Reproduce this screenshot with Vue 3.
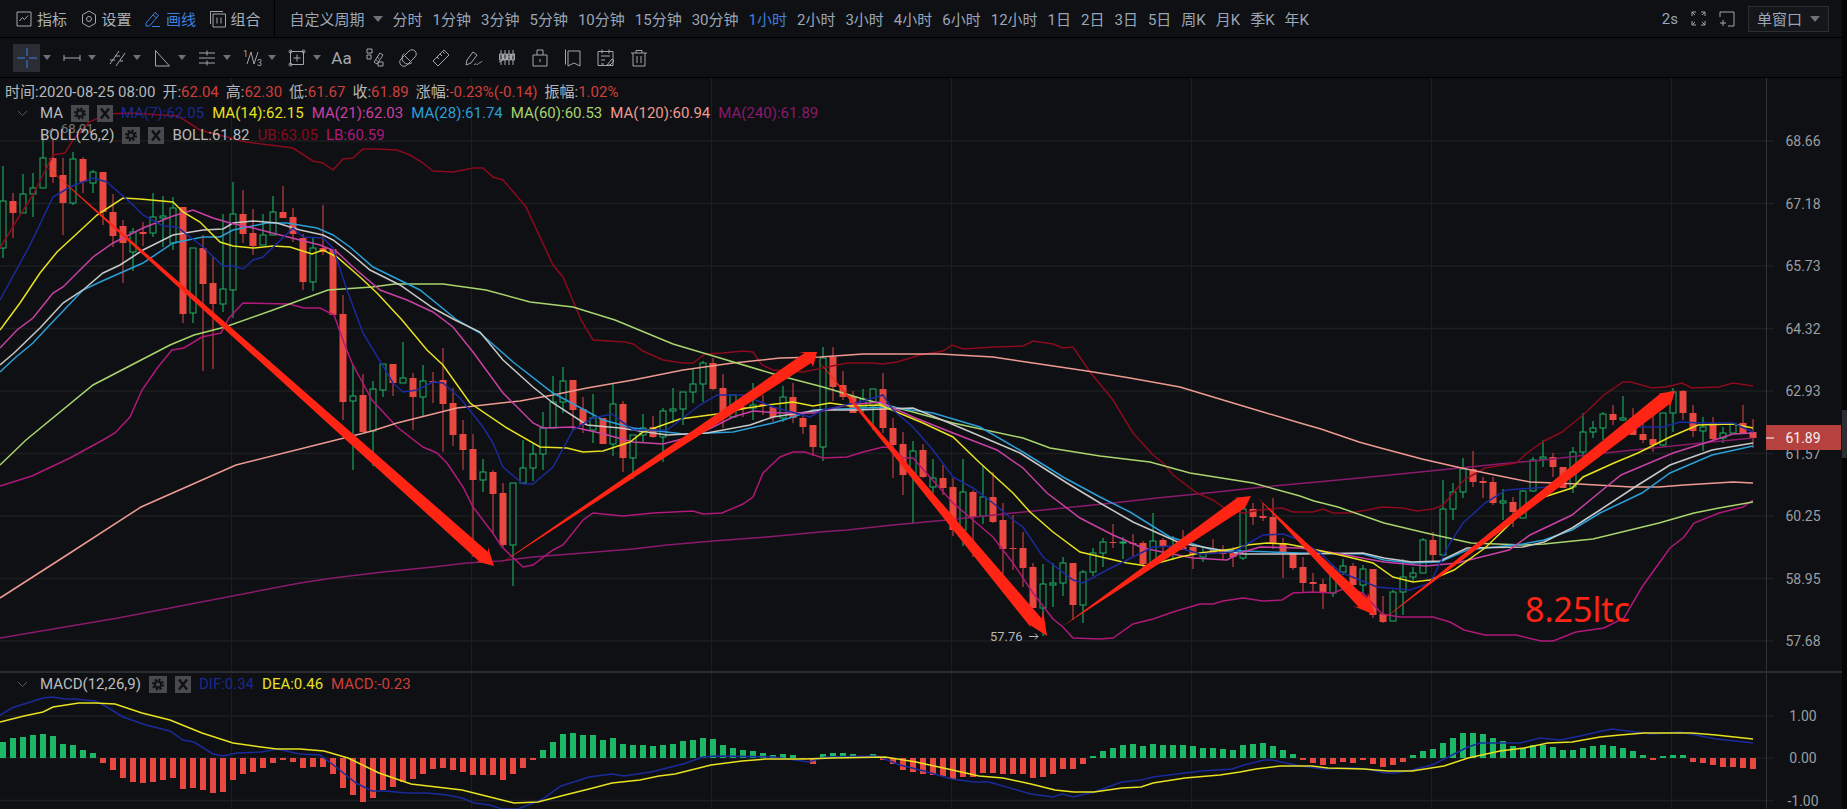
<script setup>
const periods = ['分时','1分钟','3分钟','5分钟','10分钟','15分钟','30分钟','1小时','2小时','3小时','4小时','6小时','12小时','1日','2日','3日','5日','周K','月K','季K','年K']

// toolbar icons, 20x20 box
const caretTools = [
  'M2 10h16M2 7v6M18 7v6',
  'M3 16L12 3M9 18L18 5M3 12h5M8 8h5M13 13h3',
  'M3.500 2.500v15.500h14z',
  'M2 5h16M2 10h16M2 15h16M10 2.500v5M10 12.500v5',
  'M5 16L9 4l3 12 4-12',
  'M3.500 3.500h13v13h-13zM10 6.500v7M6.500 10h7M2 3.500a1.500 1.500 0 1 0 3 0a1.500 1.500 0 1 0-3 0M15 3.500a1.500 1.500 0 1 0 3 0a1.500 1.500 0 1 0-3 0M2 16.500a1.500 1.500 0 1 0 3 0a1.500 1.500 0 1 0-3 0'
]
const plainTools = [
  'M2 1h5v4H2zM2 7h4v4H2zM13 14h5v4h-5zM9 14L15 5l3 2-6 9zM12 9l2 1.500M10.500 11.500l2 1.500',
  'M3 11L11 3a4 4 0 0 1 6 6l-8 8a4 4 0 0 1-6-6zM7 8l5 5M6 5.500a6 6 0 1 0 8 9',
  'M2 13L13 2l5 5L7 18zM6 9l2 2M9 6l2 2M12 4l1.500 1.500',
  'M2 17l1-5 6-8 4 3-6 8-5 2zM10 17c1.500-3 3 1 4-1s2 0 4-3',
  'M4 2v15M8 2v15M12 2v15M16 2v15M2 14L18 6M2.500 6h3v6h-3zM6.500 6h3v6h-3zM10.500 6h3v6h-3zM14.500 6h3v6h-3z',
  'M3 7h14v11H3zM7 7V2h6v5M10 11v3',
  'M5 3h12v15l-6-3-6 3zM2.500 1.500v15',
  'M2 3.500h15v14H2zM6 1.500v4M13 1.500v4M5 8h9M5 12h4M5 16h3M11 17l5-6 2 2-4 4z',
  'M2 5h16M7 5V2.500h6V5M4 5v13h12V5M8 8v7M12 8v7'
]

const maLegend = [
  { t: 'MA(7):62.05', c: '#1b2a8f' },
  { t: 'MA(14):62.15', c: '#e8e21f' },
  { t: 'MA(21):62.03', c: '#c940a6' },
  { t: 'MA(28):61.74', c: '#2a9fd8' },
  { t: 'MA(60):60.53', c: '#a9d46e' },
  { t: 'MA(120):60.94', c: '#ee9a90' },
  { t: 'MA(240):61.89', c: '#8a1a6c' }
]

const infoItems = [
  { l: '开:', v: '62.04' },
  { l: '高:', v: '62.30' },
  { l: '低:', v: '61.67' },
  { l: '收:', v: '61.89' },
  { l: '涨幅:', v: '-0.23%(-0.14)' },
  { l: '振幅:', v: '1.02%' }
]

const hLines = [141, 203.500, 266, 328.500, 391, 453.500, 516, 578.500, 641]
const hLabels = ['68.66','67.18','65.73','64.32','62.93','61.57','60.25','58.95','57.68']
const vLines = [231.500, 471.500, 711.500, 951.500, 1191.500, 1431.500, 1671.500]
const macdLines = [{ y: 716, t: '1.00' }, { y: 758, t: '0.00' }, { y: 800.500, t: '-1.00' }]

// top, bottom, wick top, wick bottom, 1 = green
const raw = [
[201,248,166,258,1],[201,213,193,238,0],[194,213,174,213,1],[188,194,173,217,1],[158,188,135,188,1],[158,177,140,183,0],[175,203,158,235,0],[159,203,152,205,1],[159,182,157,193,0],[172,183,170,193,1],
[172,212,172,225,0],[212,236,194,247,0],[226,243,220,283,0],[232,252,228,271,1],[232,234,222,246,0],[217,233,193,237,1],[216,218,196,247,1],[208,243,197,250,1],[207,314,207,323,0],[248,313,248,323,1],
[248,284,235,371,0],[283,304,257,369,0],[289,304,214,312,1],[214,290,182,318,1],[214,234,190,243,0],[233,246,209,255,0],[235,245,214,245,1],[212,235,196,235,1],[212,218,186,218,0],[217,234,208,242,0],
[238,282,234,290,0],[248,282,237,291,1],[248,252,205,255,0],[249,315,249,315,0],[314,402,295,420,0],[396,401,364,470,1],[395,432,374,432,0],[389,431,381,466,1],[364,390,364,397,1],[364,383,364,396,0],
[378,383,342,383,1],[378,397,373,430,0],[381,397,365,417,1],[381,382,372,403,0],[380,404,348,452,0],[403,435,388,446,0],[434,450,420,470,0],[449,480,434,557,0],[472,480,459,492,1],[472,494,470,533,0],
[493,545,483,547,0],[483,545,483,586,1],[468,483,440,483,1],[454,468,444,481,1],[428,454,412,470,1],[402,428,376,428,1],[381,402,367,413,1],[380,410,380,431,0],[409,425,397,433,0],[418,430,394,443,1],
[418,444,418,444,0],[404,444,384,456,1],[404,458,401,472,0],[435,458,435,479,1],[428,435,414,443,1],[427,437,416,438,0],[411,437,408,462,1],[409,411,388,423,1],[392,409,392,425,1],[384,392,369,403,1],
[363,384,361,402,1],[363,389,358,390,0],[388,417,374,428,0],[395,417,395,417,1],[407,409,395,417,0],[405,408,383,420,1],[404,406,395,415,0],[407,417,407,422,0],[397,418,386,422,1],[397,418,383,423,0],
[418,427,414,434,0],[425,447,425,456,0],[358,447,347,461,1],[357,387,347,401,0],[385,397,371,400,0],[396,413,391,413,0],[399,407,389,413,1],[389,406,389,430,1],[389,428,373,433,0],[428,445,418,478,0],
[444,475,432,495,0],[451,475,441,524,1],[450,477,444,478,0],[478,487,459,493,1],[478,488,465,495,0],[487,530,478,536,0],[492,530,459,546,1],[492,517,490,557,0],[497,516,466,524,1],[497,522,472,523,0],
[520,549,503,574,0],[548,549,515,570,0],[548,568,532,587,0],[567,608,563,608,0],[584,608,564,636,1],[583,585,563,607,1],[563,583,557,596,1],[563,605,563,620,0],[572,605,570,623,1],[553,572,548,576,1],
[542,553,538,567,1],[542,543,524,548,0],[542,543,537,559,1],[543,544,534,557,0],[543,564,541,567,0],[541,563,513,563,1],[540,547,538,560,0],[547,550,536,560,1],[547,550,530,550,0],[547,554,546,569,0],
[553,557,547,562,1],[550,553,539,553,0],[550,554,545,559,0],[553,557,547,567,0],[509,558,508,560,1],[509,517,503,525,0],[516,518,503,521,0],[517,543,498,549,0],[543,553,538,578,0],[553,568,553,570,0],
[567,583,557,593,0],[582,584,573,593,0],[584,593,579,609,0],[575,593,565,597,1],[566,572,559,575,1],[566,585,563,587,0],[569,585,565,593,1],[569,615,569,618,0],[614,622,596,623,0],[592,621,590,621,1],
[577,592,559,615,1],[573,577,567,582,1],[540,573,538,573,1],[540,555,532,561,0],[509,555,480,555,1],[492,509,483,520,1],[469,492,458,498,1],[469,482,451,487,0],[481,483,477,498,0],[482,503,477,505,0],
[501,503,489,520,1],[502,512,497,527,0],[491,518,490,518,1],[460,491,457,492,1],[457,459,440,467,1],[457,467,453,477,0],[467,488,467,488,0],[452,487,447,493,1],[432,452,413,457,1],[428,432,421,438,1],
[414,428,412,440,1],[414,420,405,425,0],[418,420,396,421,1],[418,435,408,435,0],[434,440,423,443,0],[439,445,413,452,0],[413,445,413,446,1],[392,413,388,432,1],[391,413,390,420,0],[413,431,405,437,0],
[427,431,417,451,1],[423,439,417,441,0],[433,438,427,443,1],[424,433,424,433,1],[423,433,405,433,0],[432,438,419,448,0]
]
const candles = raw.map((r, i) => ({
  x: 3 + 10 * i, top: r[0], h: Math.max(r[1] - r[0], 1), hi: r[2], lo: r[3], up: r[4] === 1
}))

const histRaw = [16,20,21,23,24,22,14,13,8,5,-5,-12,-20,-24,-25,-24,-22,-20,-31,-30,-32,-35,-34,-22,-16,-14,-10,-5,-2,-4,-10,-9,-9,-16,-30,-37,-44,-40,-32,-29,-24,-21,-16,-11,-10,-12,-14,-17,-17,-17,-22,-16,-10,-2,8,16,24,25,23,23,
18,20,14,13,13,12,13,14,17,18,20,19,13,10,8,7,5,3,4,3,-1,-6,4,5,5,4,1,4,-2,-6,-12,-14,-16,-17,-18,-21,-19,-19,-15,-15,-16,-16,-16,-20,-19,-16,-11,-11,-6,2,7,10,13,14,12,14,13,13,13,12,10,10,
9,8,13,14,15,12,8,4,-2,-5,-7,-6,-4,-5,-2,-6,-9,-7,-4,3,7,9,15,20,25,25,24,20,17,12,10,13,13,11,8,8,10,12,13,12,10,7,3,-2,2,3,3,-4,-5,-7,-9,-9,-10,-11]
const hist = histRaw.map((v, i) => ({ x: 3 + 10 * i - 3, y: v > 0 ? 758 - v : 758, h: Math.abs(v), up: v > 0 }))

const lines = [
  { c: '#8a1a6c', p: '0,638 118,618 300,583 333,578 383,572 433,567 467,563 500,561 533,557 583,553 633,549 667,545 713,541 767,537 820,532 847,530 893,525 947,520 1013,513 1063,508 1113,503 1157,498 1207,493 1263,487 1317,482 1370,477 1440,470 1499,464 1544,460 1604,453 1663,447 1701,443 1753,438' },
  { c: '#8b0a1e', p: '0,248 20,215 33,195 53,155 65,153 73,140 89,122 107,114 130,113 178,116 200,130 246,142 293,148 313,161 323,163 333,170 343,159 353,158 363,149 377,149 397,150 410,155 423,163 433,171 453,172 473,168 483,168 493,177 503,180 515,194 526,207 553,265 563,277 581,320 593,340 625,342 633,344 643,351 663,360 683,363 693,363 705,354 723,353 743,351 753,352 762,365 773,370 803,372 847,363 873,363 883,364 897,362 920,355 943,351 952,345 963,349 993,347 1023,346 1033,341 1053,344 1063,348 1073,347 1090,372 1113,400 1133,433 1153,455 1163,463 1173,475 1197,493 1213,500 1227,510 1243,513 1260,510 1282,508 1293,512 1313,512 1323,509 1333,513 1350,513 1367,510 1382,507 1403,508 1417,511 1433,509 1443,505 1464,480 1485,468 1516,463 1527,453 1544,441 1562,432 1583,415 1604,395 1623,382 1631,382 1652,388 1666,387 1682,383 1692,388 1719,387 1733,383 1753,386' },
  { c: '#b0187a', p: '0,486 32,476 70,458 103,440 115,433 130,417 142,390 158,367 172,350 184,348 202,337 221,333 229,318 243,303 289,304 304,308 320,308 334,315 344,343 352,363 372,400 397,427 423,447 437,453 447,463 463,487 473,507 492,532 502,547 523,567 533,565 553,550 563,545 583,520 593,513 623,516 653,513 693,511 703,514 722,513 743,504 753,497 763,473 780,457 793,452 805,452 823,458 847,457 863,452 883,447 893,448 903,458 913,458 953,503 973,520 993,537 1013,563 1033,593 1053,619 1063,627 1073,638 1100,639 1113,638 1133,624 1153,619 1173,612 1200,604 1213,604 1223,601 1243,598 1263,601 1282,600 1293,593 1313,592 1333,593 1343,589 1363,593 1382,614 1400,617 1433,617 1450,622 1464,630 1485,635 1516,635 1541,641 1553,641 1576,632 1604,628 1624,618 1642,587 1670,548 1684,537 1694,523 1719,513 1743,507 1753,500' },
  { c: '#ee9a90', p: '0,598 70,553 141,507 236,465 336,440 372,431 397,423 457,408 520,401 553,395 587,388 633,380 683,370 733,363 780,358 820,357 863,354 913,354 940,354 993,357 1033,363 1087,371 1130,378 1180,387 1213,397 1263,412 1300,423 1321,429 1359,442 1377,447 1422,459 1457,467 1495,475 1530,482 1579,484 1631,487 1659,487 1684,485 1733,482 1753,483' },
  { c: '#a9d46e', p: '0,465 26,440 93,385 170,345 194,335 225,327 273,310 328,290 372,287 395,284 443,284 486,290 530,302 573,307 615,320 673,344 710,355 777,375 823,387 863,399 913,412 953,423 1023,438 1050,448 1100,456 1150,462 1190,473 1253,483 1300,496 1314,501 1338,507 1384,523 1426,533 1471,543 1523,545 1544,544 1593,539 1659,523 1694,513 1719,508 1753,502' },
  { c: '#2a9fd8', p: '0,372 16,357 33,343 45,330 83,290 100,282 143,263 173,243 203,237 220,237 233,230 267,223 287,223 317,228 333,235 350,247 373,267 420,290 457,320 480,333 513,362 553,393 603,420 633,428 683,434 733,432 773,423 793,417 813,410 890,407 933,413 980,427 1023,452 1063,477 1100,497 1130,512 1170,537 1213,550 1300,553 1363,554 1384,560 1412,563 1440,562 1467,550 1495,547 1523,544 1544,540 1572,530 1600,513 1642,493 1670,473 1712,455 1753,446' },
  { c: '#c8c8c8', p: '0,365 14,353 40,328 63,303 83,290 103,273 120,265 143,250 173,235 203,230 223,229 233,223 253,221 277,223 300,230 323,235 333,240 350,253 370,270 400,285 433,308 455,320 480,332 503,360 533,387 553,403 587,425 620,428 667,435 707,433 750,425 773,417 820,410 857,410 913,408 947,422 973,433 1020,453 1067,483 1100,503 1133,522 1180,543 1243,554 1300,554 1363,553 1384,558 1412,562 1440,561 1467,548 1523,547 1544,542 1572,528 1600,510 1638,485 1670,465 1712,450 1753,443' },
  { c: '#c940a6', p: '0,348 17,330 33,318 53,293 63,287 93,257 113,243 143,228 173,216 193,210 213,218 230,223 253,228 280,235 300,240 320,245 337,252 353,267 380,290 407,300 433,312 453,327 473,352 503,393 533,423 543,428 573,427 600,433 633,442 663,444 697,435 733,417 753,411 780,413 813,413 847,405 880,402 913,417 953,433 997,450 1023,468 1047,493 1080,518 1113,535 1143,548 1167,553 1193,558 1227,560 1240,553 1260,547 1300,548 1335,553 1384,562 1426,566 1457,563 1509,550 1530,535 1572,515 1600,492 1621,475 1673,453 1705,443 1733,434 1753,433' },
  { c: '#e8e21f', p: '0,330 20,303 40,273 57,252 97,215 123,198 140,199 173,202 183,212 200,222 220,242 233,246 253,248 273,246 290,247 312,254 323,250 337,257 360,277 377,293 402,320 427,350 443,365 470,403 507,428 540,447 567,448 583,452 603,451 630,442 643,432 680,419 717,414 747,408 767,405 793,402 813,406 830,403 850,406 880,405 923,423 953,437 980,463 1013,493 1030,512 1053,532 1080,552 1127,563 1147,566 1180,557 1200,553 1233,549 1247,545 1267,543 1287,544 1303,547 1340,555 1373,563 1393,577 1413,582 1430,580 1454,570 1485,548 1516,518 1544,497 1572,488 1583,477 1614,463 1638,453 1670,437 1698,425 1733,424 1753,428' },
  { c: '#1b2a9c', p: '0,300 30,245 53,197 70,187 93,178 107,182 133,205 143,215 163,226 177,227 203,247 223,266 233,266 243,269 253,260 263,257 293,228 303,237 323,238 333,248 347,290 363,333 393,383 403,392 417,390 433,382 443,383 460,398 483,427 493,443 503,467 523,484 533,484 553,467 573,430 593,418 612,414 633,430 667,430 700,405 717,395 743,395 773,407 810,417 823,410 863,401 883,395 893,410 913,427 933,450 953,477 973,488 993,503 1013,520 1023,527 1043,557 1073,580 1083,583 1107,570 1133,557 1153,547 1173,546 1200,554 1233,552 1263,535 1283,534 1300,540 1320,553 1340,572 1377,587 1410,590 1430,583 1450,543 1463,523 1485,503 1506,490 1548,487 1572,473 1614,440 1638,427 1663,427 1680,422 1701,423 1733,423 1753,432' }
]

const difLine = '0,715 12,708 24,704 43,698 53,697 65,699 75,699 95,701 107,707 123,717 146,725 170,731 183,740 194,742 213,754 223,756 237,753 261,752 277,749 300,754 320,755 336,767 356,783 372,791 385,791 407,793 427,793 447,795 462,798 474,803 490,805 502,809 518,809 541,800 561,786 589,777 612,774 624,776 651,772 683,764 703,757 715,756 774,757 809,762 825,757 877,756 900,765 924,771 952,779 974,782 989,782 1031,794 1053,797 1062,794 1073,797 1094,792 1122,782 1141,780 1153,777 1201,771 1232,769 1244,765 1264,760 1272,760 1300,766 1324,769 1356,768 1372,770 1384,773 1396,773 1412,770 1432,765 1448,757 1468,747 1480,743 1520,743 1540,738 1560,740 1580,736 1602,731 1612,729 1652,734 1680,732 1716,739 1753,743'
const deaLine = '0,722 24,716 43,712 53,707 79,703 95,703 115,704 142,713 170,720 202,733 233,743 261,747 277,749 300,749 324,751 348,758 379,773 411,784 462,790 490,797 514,803 538,802 565,795 593,788 612,783 640,780 659,776 675,774 711,765 742,761 766,759 805,759 833,758 885,757 916,762 948,769 979,776 1003,778 1031,784 1055,790 1074,792 1094,792 1122,788 1141,787 1153,783 1185,778 1220,775 1240,772 1256,769 1280,766 1312,766 1328,768 1364,769 1388,771 1412,771 1444,766 1468,758 1500,751 1524,748 1548,743 1572,742 1600,737 1620,735 1644,733 1692,733 1716,735 1753,739'

// hand drawn red arrows: tail, tip, two wing points, neck width
const arrowDefs = [
  [[38,159],[494,566],[475,561],[488,547],13],
  [[497,566],[817,352],[798,352],[813,367],12],
  [[816,358],[1047,636],[1030,625],[1043,610],14],
  [[1063,626],[1251,496],[1233,498],[1245,508],13],
  [[1258,498],[1375,615],[1353,606],[1368,593],12],
  [[1380,622],[1675,391],[1656,394],[1670,407],14]
]
const arrows = arrowDefs.map(([tail, tip, a, b, neck]) => {
  const len = Math.hypot(tip[0] - tail[0], tip[1] - tail[1])
  const ux = (tip[0] - tail[0]) / len
  const uy = (tip[1] - tail[1]) / len
  const back = ((tip[0] - a[0]) * ux + (tip[1] - a[1]) * uy + (tip[0] - b[0]) * ux + (tip[1] - b[1]) * uy) / 2 * 0.8
  const nx = -uy
  const ny = ux
  const mx = tip[0] - ux * back
  const my = tip[1] - uy * back
  const sideA = (a[0] - mx) * nx + (a[1] - my) * ny
  const s = sideA > 0 ? 1 : -1
  const pts = [
    tail,
    [mx + s * nx * neck / 2, my + s * ny * neck / 2],
    a,
    tip,
    b,
    [mx - s * nx * neck / 2, my - s * ny * neck / 2]
  ]
  return pts.map(p => p[0].toFixed(1) + ',' + p[1].toFixed(1)).join(' ')
})
</script>

<template>
  <div class="page">
    <div class="panel">
      <header class="topbar">
        <div class="menu">
          <span class="menu-item">
            <svg width="18" height="18" viewBox="0 0 18 18" class="ico"><path d="M2 2h14v14H2zM4.500 11l3-3.500 2 2 3.500-4" /></svg>指标
          </span>
          <span class="menu-item">
            <svg width="18" height="18" viewBox="0 0 18 18" class="ico"><path d="M9 1l6.500 3.800v8.400L9 17l-6.500-3.800V4.800zM6.500 9a2.500 2.500 0 1 0 5 0a2.500 2.500 0 1 0-5 0" /></svg>设置
          </span>
          <span class="menu-item active">
            <svg width="18" height="18" viewBox="0 0 18 18" class="ico blue"><path d="M2 13L11 2.500l3.500 3L5.500 16H2zM9 5l3.500 3M8 16.500h8" /></svg>画线
          </span>
          <span class="menu-item">
            <svg width="18" height="18" viewBox="0 0 18 18" class="ico"><path d="M1.500 14V1.500H14M4 4h12.500v13H4zM8 7.500v6M12 7.500v6" /></svg>组合
          </span>
        </div>
        <div class="periods">
          <span class="custom">自定义周期<i class="caret"></i></span>
          <span v-for="p in periods" :key="p" class="period" :class="{ on: p === '1小时' }">{{ p }}</span>
        </div>
        <div class="top-right">
          <span class="period">2s</span>
          <svg width="15" height="15" viewBox="0 0 15 15" class="ico"><path d="M1 5V1h4M1 1l3 3M10 1h4v4M14 1l-3 3M1 10v4h4M1 14l3-3M14 10v4h-4M14 14l-3-3" /></svg>
          <svg width="16" height="16" viewBox="0 0 16 16" class="ico"><path d="M1 6V1h14v14H9M1 12h6M4 9v6" /></svg>
          <span class="window-btn">单窗口<i class="caret"></i></span>
        </div>
      </header>

      <nav class="toolbar">
        <div v-for="(d, i) in [null, ...caretTools]" :key="i" class="tool-group">
          <span class="tool" :class="{ selected: i === 0 }">
            <svg v-if="i === 0" width="22" height="22" viewBox="0 0 22 22" class="ico blue"><path d="M11 1v8M11 13v8M1 11h8M13 11h8" /></svg>
            <svg v-else width="20" height="20" viewBox="0 0 20 20" class="ico">
              <path :d="d" />
              <template v-if="i === 5">
                <text x="1" y="9" class="mini">1</text>
                <text x="15" y="18" class="mini">3</text>
              </template>
            </svg>
          </span>
          <i class="caret small"></i>
        </div>
        <div class="plain-tools">
          <span class="plain-tool aa">Aa</span>
          <span v-for="(d, i) in plainTools" :key="i" class="plain-tool">
            <svg width="20" height="20" viewBox="0 0 20 20" class="ico"><path :d="d" /></svg>
          </span>
        </div>
      </nav>

      <main class="chart">
        <svg class="plot" width="1842" height="731" viewBox="0 78 1842 731">
          <g class="grid">
            <line v-for="y in hLines" :key="y" x1="0" x2="1774" :y1="y" :y2="y" stroke-width="1.500" />
            <line v-for="m in macdLines" :key="m.y" x1="0" x2="1774" :y1="m.y" :y2="m.y" stroke-width="1.500" />
            <line v-for="x in vLines" :key="x" :x1="x" :x2="x" y1="78" y2="809" />
          </g>
          <line x1="1766.500" x2="1766.500" y1="78" y2="809" stroke="#303235" />
          <line x1="0" x2="1842" y1="672" y2="672" stroke="#2b2d30" stroke-width="2" />

          <g v-for="c in candles" :key="c.x">
            <line :x1="c.x" :x2="c.x" :y1="c.hi" :y2="c.lo" :stroke="c.up ? '#1a9a58' : '#b03c3b'" stroke-width="1.300" />
            <rect v-if="c.up" :x="c.x - 3" :y="c.top" width="6" :height="c.h" fill="#0e1013" stroke="#1fb266" />
            <rect v-else :x="c.x - 3.500" :y="c.top" width="7" :height="c.h" fill="#e8483f" />
          </g>

          <polyline v-for="l in lines" :key="l.c" :points="l.p" :stroke="l.c" class="ma-line" stroke-width="1.500" />

          <g v-for="b in hist" :key="b.x">
            <rect :x="b.x" :y="b.y" width="6" :height="b.h" :fill="b.up ? '#1cb866' : '#e8483f'" />
          </g>
          <polyline :points="difLine" stroke="#1b2a9c" class="ma-line" stroke-width="1.500" />
          <polyline :points="deaLine" stroke="#e8e21f" class="ma-line" stroke-width="1.500" />

          <polygon v-for="a in arrows" :key="a" :points="a" fill="#ff2414" />

          <text x="1525" y="622" class="note">8.25ltc</text>
          <text x="990" y="641" class="mark">57.76</text>
          <path d="M1029 636.500h9M1035 633.500l3 3-3 3" fill="none" stroke="#b8b8b8" />
          <text x="61" y="133" class="mark dim">68.91</text>
          <path d="M47 133l6-5" fill="none" stroke="#777" />

          <text v-for="(t, i) in hLabels" :key="t" x="1803" :y="hLines[i] + 5" class="axis">{{ t }}</text>
          <text v-for="m in macdLines" :key="m.t" x="1803" :y="m.y + 5" class="axis">{{ m.t }}</text>

          <rect x="1766" y="425" width="75" height="25" fill="#b5423f" />
          <line x1="1766" x2="1774" y1="438" y2="438" stroke="#fff" />
          <text x="1803" y="443" class="axis price">61.89</text>
        </svg>

        <div class="legend">
          <div class="info-row">
            <span>时间:2020-08-25 08:00</span>
            <span v-for="it in infoItems" :key="it.l">{{ it.l }}<b>{{ it.v }}</b></span>
          </div>
          <div class="ma-row">
            <svg width="11" height="7" viewBox="0 0 11 7" class="chev"><path d="M1 1l4.500 4.500L10 1" /></svg>
            <span class="name">MA</span>
            <svg width="18" height="17" viewBox="0 0 18 17" class="btn"><rect width="18" height="17" /><circle cx="9" cy="8.500" r="4.500" fill="none" stroke="#111" stroke-width="3" stroke-dasharray="2 1.500" /><circle cx="9" cy="8.500" r="3" fill="none" stroke="#111" stroke-width="1.800" /></svg>
            <svg width="16" height="17" viewBox="0 0 16 17" class="btn"><rect width="16" height="17" /><path d="M4 3.500l8 10M12 3.500L4 13.500" stroke="#111" stroke-width="2.500" /></svg>
            <span v-for="m in maLegend" :key="m.t" :style="{ color: m.c }">{{ m.t }}</span>
          </div>
          <div class="ma-row boll">
            <span class="name">BOLL(26,2)</span>
            <svg width="18" height="17" viewBox="0 0 18 17" class="btn"><rect width="18" height="17" /><circle cx="9" cy="8.500" r="4.500" fill="none" stroke="#111" stroke-width="3" stroke-dasharray="2 1.500" /><circle cx="9" cy="8.500" r="3" fill="none" stroke="#111" stroke-width="1.800" /></svg>
            <svg width="16" height="17" viewBox="0 0 16 17" class="btn"><rect width="16" height="17" /><path d="M4 3.500l8 10M12 3.500L4 13.500" stroke="#111" stroke-width="2.500" /></svg>
            <span class="name">BOLL:61.82</span>
            <span class="ub">UB:63.05</span>
            <span class="lb">LB:60.59</span>
          </div>
        </div>

        <div class="legend macd">
          <div class="ma-row">
            <svg width="11" height="7" viewBox="0 0 11 7" class="chev"><path d="M1 1l4.500 4.500L10 1" /></svg>
            <span class="name">MACD(12,26,9)</span>
            <svg width="18" height="17" viewBox="0 0 18 17" class="btn"><rect width="18" height="17" /><circle cx="9" cy="8.500" r="4.500" fill="none" stroke="#111" stroke-width="3" stroke-dasharray="2 1.500" /><circle cx="9" cy="8.500" r="3" fill="none" stroke="#111" stroke-width="1.800" /></svg>
            <svg width="16" height="17" viewBox="0 0 16 17" class="btn"><rect width="16" height="17" /><path d="M4 3.500l8 10M12 3.500L4 13.500" stroke="#111" stroke-width="2.500" /></svg>
            <span class="dif">DIF:0.34</span>
            <span class="dea">DEA:0.46</span>
            <span class="macd-val">MACD:-0.23</span>
          </div>
        </div>
      </main>
    </div>
    <div class="edge"><i></i></div>
  </div>
</template>

<style>
html, body { background: #050608; }
</style>

<style scoped>
.page {
  display: flex;
  width: 1847px;
  height: 809px;
  overflow: hidden;
  font-family: Roboto, "Noto Sans CJK SC", sans-serif;
  color: #b6b8bb;
}
.panel {
  width: 1842px;
  display: flex;
  flex-direction: column;
  background: #0e1013;
}
.edge {
  flex: 1;
  background: #050608;
  padding-top: 410px;
}
.edge i {
  display: block;
  height: 48px;
  background: #2c2e32;
}

.topbar {
  height: 37px;
  flex: none;
  display: flex;
  align-items: center;
  border-bottom: 1px solid #000;
  font-size: 15px;
  color: #9aa6b8;
}
.menu {
  display: flex;
  align-items: center;
  gap: 12.500px;
  height: 37px;
  padding: 0 13px 0 15px;
  border-right: 1px solid #000;
  color: #aab0b8;
}
.menu-item {
  display: flex;
  align-items: center;
  gap: 4px;
}
.menu-item.active { color: #3a80e0; }
.periods {
  display: flex;
  align-items: center;
  gap: 10px;
  padding-left: 15px;
}
.custom { display: flex; align-items: center; }
.period { white-space: nowrap; }
.period.on { color: #3a80e0; }
.caret {
  display: inline-block;
  margin-left: 8px;
  margin-right: 0;
  border-left: 5px solid transparent;
  border-right: 5px solid transparent;
  border-top: 6px solid #6d7178;
}
.caret.small {
  margin-left: 3px;
  border-left-width: 4px;
  border-right-width: 4px;
  border-top-width: 5px;
}
.top-right {
  margin-left: auto;
  display: flex;
  align-items: center;
  gap: 13px;
  padding-right: 13px;
}
.window-btn {
  display: flex;
  align-items: center;
  height: 24px;
  padding: 0 8px;
  border: 1px solid #2c2e32;
  background: #14161a;
}
.ico {
  fill: none;
  stroke: #a2a6ac;
  stroke-width: 1;
  flex: none;
}
.ico.blue { stroke: #3a80e0; }
.mini {
  font-size: 9px;
  fill: #a2a6ac;
  stroke: none;
}

.toolbar {
  height: 39px;
  flex: none;
  display: flex;
  align-items: center;
  padding-left: 13px;
  border-bottom: 1px solid #000;
}
.tool-group {
  display: flex;
  align-items: center;
  width: 45px;
}
.tool {
  width: 27px;
  height: 28px;
  display: flex;
  align-items: center;
  justify-content: center;
}
.tool.selected { background: #2a2d33; }
.plain-tools {
  display: flex;
  align-items: center;
  margin-left: -3px;
}
.plain-tool {
  width: 33px;
  display: flex;
  justify-content: center;
}
.aa { font-size: 17px; color: #a4a7ad; }

.chart {
  flex: 1;
  position: relative;
}
.plot { display: block; }
.grid line { stroke: #1c1e21; }
.ma-line { fill: none; }
.axis {
  fill: #9b9ea3;
  font-size: 14px;
  text-anchor: middle;
}
.axis.price { fill: #f2f2f2; }
.mark { fill: #b8b8b8; font-size: 13px; }
.mark.dim { fill: #777; }
.note {
  fill: #ff2414;
  font-size: 34px;
  font-family: "Noto Sans", sans-serif;
}

.legend {
  position: absolute;
  left: 0;
  top: 0;
  font-size: 15px;
}
.legend.macd { top: 595px; }
.info-row {
  height: 24px;
  display: flex;
  align-items: center;
  gap: 7px;
  padding-left: 5px;
}
.info-row b {
  font-weight: 400;
  color: #cf3f3a;
}
.ma-row {
  height: 22px;
  display: flex;
  align-items: center;
  gap: 8px;
  padding-left: 17px;
}
.ma-row.boll { padding-left: 40px; }
.chev {
  fill: none;
  stroke: #55585d;
  margin-right: 4px;
}
.name { color: #bcbcbc; }
.btn { fill: #484a4e; flex: none; }
.ub { color: #8b0a1e; }
.lb { color: #b0187a; }
.dif { color: #1b2a8f; }
.dea { color: #e8e21f; }
.macd-val { color: #cf3f3a; }
</style>
